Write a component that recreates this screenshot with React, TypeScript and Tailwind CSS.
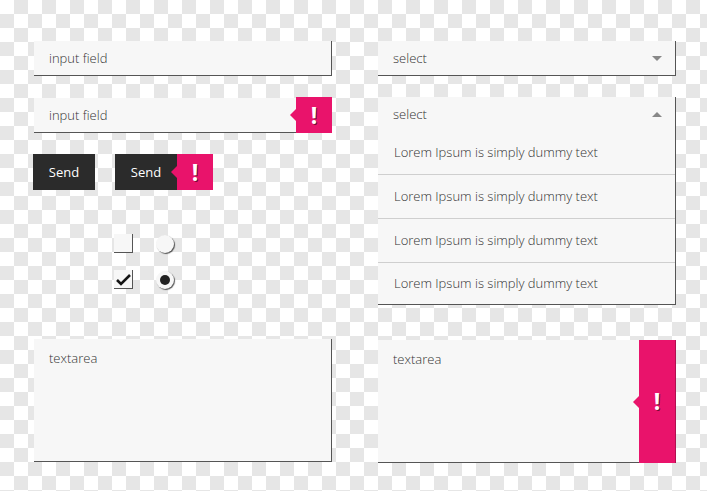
import React from "react";

const PINK = "bg-[#e9136b]";

function Bang() {
  return (
    <span className="text-white font-bold text-[23px] leading-none [text-shadow:1px_1px_0_rgba(0,0,0,0.55)]">
      !
    </span>
  );
}

function Arrow() {
  return (
    <span className="absolute left-[-6px] top-1/2 -translate-y-1/2 w-0 h-0 border-y-[6px] border-y-transparent border-r-[6px] border-r-[#e9136b]" />
  );
}

function Field({ children, className = "" }: { children?: React.ReactNode; className?: string }) {
  return (
    <div
      className={`relative h-[35px] bg-[#f7f7f7] border-r border-b border-[#555] flex items-center pl-[15px] pt-px text-[13px] font-light text-[#333] ${className}`}
    >
      {children}
    </div>
  );
}

function Item({ first, last, children }: { first?: boolean; last?: boolean; children: React.ReactNode }) {
  return (
    <div
      className={`flex items-center pl-[16px] ${first ? "h-[42px]" : last ? "h-[42px] border-t border-[#cfcfcf]" : "h-[44px] border-t border-[#cfcfcf]"}`}
    >
      {children}
    </div>
  );
}

export default function App() {
  return (
    <div className="w-[707px] h-[491px] overflow-hidden bg-[repeating-conic-gradient(#e6e6e6_0deg_90deg,#ffffff_90deg_180deg)] bg-size-[28px_28px]">
      <div
        className="w-full h-full flex gap-[46px] pl-[34px] pt-[41px]"
        style={{ fontFamily: '"Open Sans", sans-serif' }}
      >
        {/* Left column */}
        <div className="w-[298px] flex flex-col">
          <Field>input field</Field>
          <Field className="mt-[22px]">
            input field
            <div className={`absolute top-[-1px] right-[-1px] bottom-[-1px] w-[36px] ${PINK} flex items-center justify-center`}>
              <Arrow />
              <Bang />
            </div>
          </Field>

          <div className="mt-[21px] -ml-px flex gap-[20px]">
            <button className="w-[62px] h-[36px] bg-[#2b2b2b] text-white text-[13px] flex items-center justify-center pt-px">
              Send
            </button>
            <div className="flex h-[36px]">
              <button className="w-[62px] h-[36px] bg-[#2b2b2b] text-white text-[13px] flex items-center justify-center pt-px">
                Send
              </button>
              <div className={`relative w-[36px] h-[36px] ${PINK} flex items-center justify-center`}>
                <Arrow />
                <Bang />
              </div>
            </div>
          </div>

          <div className="mt-[44px] pl-[80px] grid grid-cols-[19px_18px] gap-x-[23px] gap-y-[17px] items-center">
            <div className="w-[19px] h-[19px] bg-[#f7f7f7] border-r border-b border-[#555]" />
            <div className="w-[18px] h-[18px] rounded-full bg-[#f7f7f7] shadow-[1px_1px_1px_rgba(0,0,0,0.65)]" />
            <div className="w-[19px] h-[19px] bg-[#f7f7f7] border-r border-b border-[#555] flex items-center justify-center">
              <svg width="17" height="17" viewBox="0 0 17 17">
                <path d="M2 9 L6 13 L15 4" fill="none" stroke="#151515" strokeWidth="2.6" strokeLinecap="butt" strokeLinejoin="miter" />
              </svg>
            </div>
            <div className="w-[18px] h-[18px] rounded-full bg-[#f7f7f7] shadow-[1px_1px_1px_rgba(0,0,0,0.65)] flex items-center justify-center">
              <div className="w-[10px] h-[10px] rounded-full bg-[#222]" />
            </div>
          </div>

          <div className="mt-[50px] h-[123px] bg-[#f7f7f7] border-r border-b border-[#555] pl-[15px] pt-[10px] text-[13px] font-light leading-[18px] text-[#333]">
            textarea
          </div>
        </div>

        {/* Right column */}
        <div className="w-[298px] flex flex-col">
          <Field className="justify-between pr-[13px]">
            select
            <span className="w-0 h-0 border-x-[5px] border-x-transparent border-t-[5px] border-t-[#888]" />
          </Field>

          <div className="mt-[21px] bg-[#f7f7f7] border-r border-b border-[#555] text-[13px] font-light text-[#333]">
            <div className="h-[35px] flex items-center justify-between pl-[15px] pr-[13px]">
              select
              <span className="w-0 h-0 border-x-[5px] border-x-transparent border-b-[5px] border-b-[#888]" />
            </div>
            <Item first>Lorem Ipsum is simply dummy text</Item>
            <Item>Lorem Ipsum is simply dummy text</Item>
            <Item>Lorem Ipsum is simply dummy text</Item>
            <Item last>Lorem Ipsum is simply dummy text</Item>
          </div>

          <div className="mt-[35px] relative h-[123px] bg-[#f7f7f7] border-b border-[#555] pl-[15px] pt-[10px] text-[13px] font-light leading-[18px] text-[#333]">
            textarea
            <div className={`absolute top-0 right-0 bottom-[-1px] w-[37px] ${PINK} border-r border-[#b0104f] flex items-center justify-center`}>
              <Arrow />
              <Bang />
            </div>
          </div>
        </div>
      </div>
    </div>
  );
}
